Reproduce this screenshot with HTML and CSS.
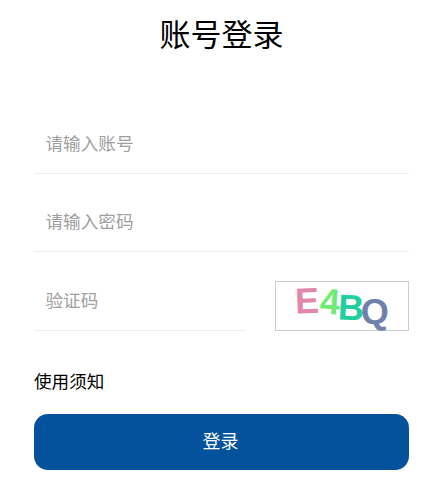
FILE: index.html
```html
<!DOCTYPE html>
<html lang="zh-CN">
<head>
    <meta charset="UTF-8">
    <meta name="viewport" content="width=device-width, initial-scale=1.0">
    <title>账号登录</title>
    <link rel="stylesheet" href="styles.css">
</head>
<body>
    <div class="login">
        <h1 class="title">账号登录</h1>

        <div class="field">
            <input class="input" type="text" placeholder="请输入账号">
        </div>
        <div class="field field-short">
            <input class="input" type="password" placeholder="请输入密码">
        </div>

        <div class="code-row">
            <div class="field code-field">
                <input class="input" type="text" placeholder="验证码">
            </div>
            <div class="captcha">
                <svg width="132" height="48" viewBox="0 0 132 48">
                    <text class="c1" x="19" y="31" transform="rotate(-2 30 18)">E</text>
                    <text class="c2" x="44" y="32" transform="rotate(4 54 20)">4</text>
                    <text class="c3" x="62" y="38" transform="rotate(3 74 28)">B</text>
                    <text class="c4" x="85" y="42" transform="rotate(-3 98 32)">Q</text>
                </svg>
            </div>
        </div>

        <div class="notice">使用须知</div>
        <button class="submit" type="button">登录</button>
    </div>
</body>
</html>
```

FILE: styles.css
```css
body {
    margin: 0;
    background-color: #fff;
    font-family: "Liberation Sans", "Noto Sans CJK SC", sans-serif;
    color: #000;
}
.login {
    padding: 0 29px 14px 34px;
}
.title {
    margin: 0;
    padding-top: 13px;
    height: 95px;
    box-sizing: border-box;
    font-size: 31px;
    font-weight: normal;
    line-height: 45px;
    text-align: center;
}
.field {
    height: 79px;
    display: flex;
    align-items: flex-end;
    border-bottom: 1px solid #eee;
    box-sizing: border-box;
}
.field-short {
    height: 78px;
}
.input {
    width: 100%;
    height: 58px;
    padding: 0 12px 0 11.5px;
    box-sizing: border-box;
    border: 0;
    outline: 0;
    background: transparent;
    font-family: inherit;
    font-size: 17.6px;
}
.input::placeholder {
    color: #a0a0a0;
    opacity: 1;
}
.code-row {
    display: flex;
    justify-content: space-between;
    align-items: flex-end;
}
.code-field {
    width: 212px;
}
.captcha {
    width: 134px;
    height: 50px;
    box-sizing: border-box;
    border: 1px solid #ccc;
}
.captcha svg {
    display: block;
    overflow: visible;
}
.captcha text {
    font-family: "Liberation Sans", sans-serif;
    font-size: 36px;
    font-weight: bold;
}
.c1 { fill: #e387a8; }
.c2 { fill: #6fec73; }
.c3 { fill: #1fcf9f; }
.c4 { fill: #6f80ad; }
.notice {
    margin-top: 39px;
    font-size: 17.6px;
    line-height: 25px;
}
.submit {
    display: block;
    width: 100%;
    height: 56px;
    margin-top: 19px;
    padding: 0 2px 5px 0;
    border: 0;
    border-radius: 14px;
    background-color: #03529b;
    color: #fff;
    font-family: inherit;
    font-size: 18px;
}
```
